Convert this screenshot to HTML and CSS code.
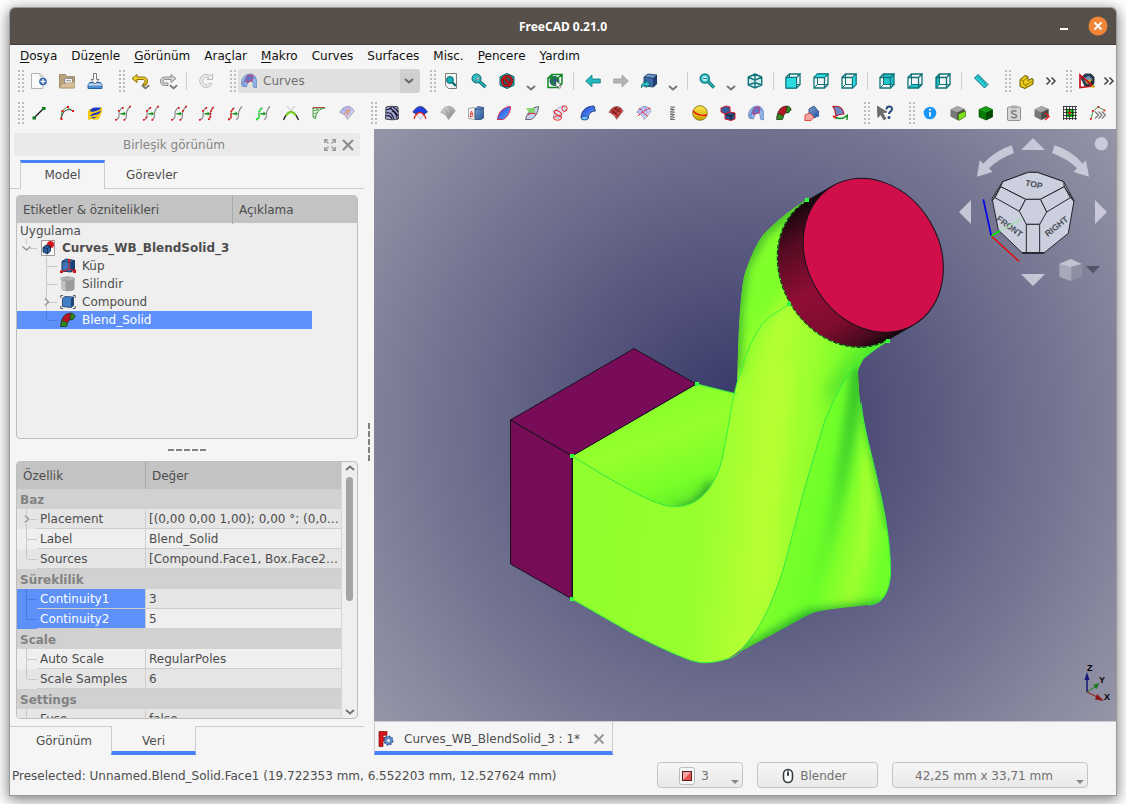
FILE: index.html
```html
<!DOCTYPE html>
<html lang="tr">
<head>
<meta charset="utf-8">
<title>FreeCAD 0.21.0</title>
<link rel="stylesheet" href="styles.css">
</head>
<body>
<svg class="defs" aria-hidden="true">
  <defs>
    <linearGradient id="g-blue" x1="0" y1="0" x2="1" y2="1"><stop offset="0" stop-color="#7aa2d8"/><stop offset="1" stop-color="#2b5593"/></linearGradient>
    <linearGradient id="g-royal" x1="0" y1="0" x2="1" y2="1"><stop offset="0" stop-color="#1d36d8"/><stop offset="1" stop-color="#5fb4ff"/></linearGradient>
    <linearGradient id="g-lilac" x1="0" y1="0" x2="1" y2="1"><stop offset="0" stop-color="#a3a8ff"/><stop offset="1" stop-color="#e4e6ff"/></linearGradient>
    <linearGradient id="g-grey" x1="0" y1="0" x2="1" y2="1"><stop offset="0" stop-color="#e0e0e0"/><stop offset="1" stop-color="#7f7f7f"/></linearGradient>
    <linearGradient id="g-gold" x1="0" y1="0" x2="0" y2="1"><stop offset="0" stop-color="#fbe84e"/><stop offset="1" stop-color="#c8a400"/></linearGradient>

    <symbol id="new" viewBox="0 0 16 16"><path d="M.5.5h8.500l3 3v12H.5z" fill="#fafafa" stroke="#b4b4b4"/><path d="M9 .5v3h3" fill="none" stroke="#c4c4c4"/><circle cx="12" cy="8.500" r="3.800" fill="#2f62a6"/><path d="M12 6v5M9.500 8.500h5" stroke="#fff" stroke-width="1.400"/></symbol>
    <symbol id="open" viewBox="0 0 16 16"><path d="M.5 14V1.500h6l1 2h8V15H.5z" fill="#b9a07c" stroke="#a58b66"/><path d="M5.500 12V5.500h8V10H6" fill="#f2f0ec" stroke="#8d8d8d"/><path d="M7 7.500h5" stroke="#999"/><path d="M1 14.500l3-3.500h2l1.500-1.500h8V14.500z" fill="#d6bf9a"/></symbol>
    <symbol id="save" viewBox="0 0 16 16"><path d="M2.500 9.500h11l1.500 2.500v3.500H1V12z" fill="#4f8fd6" stroke="#27609f"/><path d="M2 10.500h12l1 2H1z" fill="#c7d8ea"/><path d="M6.500.5h3v6h2.500L8 11 4 6.500h2.500z" fill="#fbfbfb" stroke="#7c7c7c"/></symbol>
    <symbol id="undo" viewBox="0 0 18 16"><path d="M1 5.500L6 1.500v2.500h6.500c3 0 4 2 4 4.500s-2 4.500-4.500 4.500v-2.500c1.500 0 2-.7 2-2s-.7-2-2-2H6v3z" fill="url(#g-gold)" stroke="#8d6f00"/></symbol>
    <symbol id="redo" viewBox="0 0 18 16"><path d="M17 5.500L12 1.500v2.500H5.500c-3 0-4 2-4 4.500s2 4 4 4h3.500V10H6c-1.500 0-2-.5-2-1.500s.7-2 2-2h6v3z" fill="#cfcfcf" stroke="#8e8e8e"/></symbol>
    <symbol id="refresh" viewBox="0 0 16 16"><path d="M12.500 3A6.500 6.500 0 1 0 14 11l-2-1a4 4 0 1 1-1-5.200L9 6.500h5.500v-5.500z" fill="#f2f2f2" stroke="#b8b8b8"/></symbol>
    <symbol id="wb" viewBox="0 0 16 16"><path d="M.6 9C1.500 4 5 .8 10 1c3 .3 5 3 5.400 6v8l-3-1c0-3-.4-5-1.400-6L9 8c-2 1-3 3-3.500 6L1 13z" fill="#93b4ea" stroke="#5577b5" stroke-width=".7"/><path d="M5.500 4C7 2 10 1.500 12 3c-.7 1.500-1 3.500-1 5L9 8 7.500 9.500l-3-1z" fill="#6a72c8" stroke="#e0214f" stroke-width=".9"/><path d="M1 11c2-4 6-6 13-6M3 13.500c0-5 1-8 4-11.500" fill="none" stroke="#4f76c0" stroke-width=".6"/></symbol>
    <symbol id="fitall" viewBox="0 0 16 16"><path d="M2.500.5h11v15h-8l-3-3z" fill="#f4f4f4" stroke="#7d7d78"/><circle cx="7" cy="7" r="3.400" fill="#12b3b8" stroke="#0b6468"/><path d="M9.500 9.500l3.500 3.500" stroke="#0b6d72" stroke-width="2.400"/></symbol>
    <symbol id="fitsel" viewBox="0 0 16 16"><circle cx="5.500" cy="5.500" r="4.500" fill="#2ac3c6" stroke="#0b6468"/><path d="M8.500 8.500l6 5.500" stroke="#0b6468" stroke-width="3.400"/><path d="M8.500 8.500l6 5.500" stroke="#25bcc0" stroke-width="1.600"/><path d="M3.500 8.500l4-5 1 2.500-2 .5z" fill="#fff" stroke="#555" stroke-width=".6"/></symbol>
    <symbol id="drawstyle" viewBox="0 0 16 16"><path d="M8 .5l7 3.200v8.500L8 15.500 1 12.200V3.700z" fill="#28b9c0" stroke="#0d6065"/><circle cx="8" cy="8" r="4.800" fill="#2b6a70" stroke="#6e1010" stroke-width="2.800"/><path d="M4.600 4.600l6.800 6.800" stroke="#6e1010" stroke-width="2.800"/><circle cx="8" cy="8" r="4.800" fill="none" stroke="#d01a1e" stroke-width="1.500"/><path d="M4.600 4.600l6.800 6.800" stroke="#d01a1e" stroke-width="1.500"/></symbol>
    <symbol id="boxsel" viewBox="0 0 16 16"><circle cx="7.500" cy="8" r="5" fill="#34598f"/><path d="M1 5h10v9.500H1zM1 5l4-3.500h10L11 5M15 1.500v9L11 14.500M5 1.500v9.500h10" fill="none" stroke="#138a25" stroke-width="1.500"/><path d="M9 8v6.500l1.800-1.500 1.700 2.500 1.300-.8-1.500-2.200h2.300z" fill="#fff" stroke="#555" stroke-width=".6"/></symbol>
    <symbol id="back" viewBox="0 0 16 16"><path d="M.7 8L7 2v4h8.300v4H7v4z" fill="#24b9bf" stroke="#0f7a80" stroke-width=".8"/></symbol>
    <symbol id="fwd" viewBox="0 0 16 16"><path d="M15.300 8L9 2v4H.7v4H9v4z" fill="#b4b4b4" stroke="#9c9c9c" stroke-width=".8"/></symbol>
    <symbol id="link" viewBox="0 0 16 16"><path d="M3 4l4-3 9 1-3 3z" fill="#6c97cd"/><path d="M3 4l9.500 1v9L3 13z" fill="#3a68a8"/><path d="M12.500 5L16 2v8.500L12.500 14z" fill="#1e3f70"/><path d="M3 4l4-3 9 1v8.500L12.500 14 3 13zM3 4l9.500 1L16 2M12.500 5v9" fill="none" stroke="#17335c" stroke-width=".8"/><path d="M0 15c0-4 2-5.500 5-5.500V7.500L9 11l-4 3.500v-2c-2 0-3.500.5-5 2.500z" fill="#2fc4c9" stroke="#0c6368" stroke-width=".8"/></symbol>
    <symbol id="zoomi" viewBox="0 0 16 16"><circle cx="5.800" cy="5.500" r="4.500" fill="#4fcdd0" stroke="#118288" stroke-width="1.600"/><circle cx="5.800" cy="5.500" r="2.200" fill="#d8f3f3"/><path d="M4 5.500h4" stroke="#118288"/><path d="M9 8.500l6 6" stroke="#0b6468" stroke-width="3.200"/><path d="M9 8.500l6 6" stroke="#27bcc1" stroke-width="1.600"/></symbol>
    <symbol id="iso" viewBox="0 0 16 16"><path d="M8 1l6.700 3v8L8 15 1.300 12V4zM1.300 4L8 7.200 14.700 4M8 7.200V15M8 1v5M1.300 12L8 9.500l6.700 2.500" fill="#d3eeef" stroke="#0f7379" stroke-width="1.400"/></symbol>
    <symbol id="wire" viewBox="0 0 16 16"><path d="M1 4.500h10.500V15H1zM1 4.500L4.500 1H15L11.500 4.500M15 1v10.500L11.500 15" fill="none" stroke="#0f7379" stroke-width="1.300"/><path d="M4.500 1v10.500H15M1 15l3.500-3.500" fill="none" stroke="#0f7379"/></symbol>
    <symbol id="front" viewBox="0 0 16 16"><use href="#wire"/><path d="M1 4.500h10.500V15H1z" fill="#2cdbe0" stroke="#0f7379"/></symbol>
    <symbol id="top" viewBox="0 0 16 16"><use href="#wire"/><path d="M1 4.500L4.500 1H15l-3.500 3.500z" fill="#2cdbe0" stroke="#0f7379"/></symbol>
    <symbol id="right" viewBox="0 0 16 16"><use href="#wire"/><path d="M11.500 4.500L15 1v10.500L11.500 15z" fill="#2cdbe0" stroke="#0f7379"/></symbol>
    <symbol id="rear" viewBox="0 0 16 16"><path d="M4.500 1H15v10.500H4.500z" fill="#22c6cc"/><use href="#wire"/></symbol>
    <symbol id="bottom" viewBox="0 0 16 16"><path d="M1 15l3.500-3.500H15L11.500 15z" fill="#22c6cc"/><use href="#wire"/></symbol>
    <symbol id="left" viewBox="0 0 16 16"><path d="M1 4.500L4.500 1v10.500L1 15z" fill="#1fb5bb"/><use href="#wire"/></symbol>
    <symbol id="ruler" viewBox="0 0 16 16"><path d="M5 1.500l10 10-3.500 3.500-10-10z" fill="#27cdd3" stroke="#0f7379"/><path d="M6.500 3.500L5 5M8.500 5.500L7 7M10.500 7.500L9 9M12.500 9.500L11 11" stroke="#0f7379" stroke-width=".9"/></symbol>
    <symbol id="part" viewBox="0 0 16 16"><path d="M2 6.500l5-4 3 1v4l4-2 1 .5v5L7 15.500l-5-2z" fill="#e8c81c" stroke="#6c5b00"/><path d="M2 6.500l3.500 1.200L10 4M5.500 7.700v3.500L8 12v3M8 12l7-4" fill="none" stroke="#8c7700" stroke-width=".8"/></symbol>
    <symbol id="measure" viewBox="0 0 16 16"><path d="M2 5l4-4h6l3 3v6l-3 3H6z" fill="#2c4260" stroke="#151515" stroke-width=".8"/><path d="M5 5l5-2 3 3-2 4-5-1z" fill="#6f8cb4"/><path d="M6 8l6-2 1 3-5 2z" fill="#c3a92e"/><path d="M1 2v12.500L14 13z" fill="none" stroke="#c31217" stroke-width="1.700"/><path d="M12 8l3 6" stroke="#1c1c1c" stroke-width="1.200"/><circle cx="14" cy="13.500" r="1.500" fill="#d8b70f"/></symbol>

    <symbol id="line" viewBox="0 0 16 16"><path d="M3 13L13 3" stroke="#111" stroke-width="1.300"/><path d="M1.500 11.500h3.500v3H1.500zM11 2h3.500v3H11z" fill="#0d7d1a"/></symbol>
    <symbol id="editc" viewBox="0 0 16 16"><path d="M2 14L3 6l5-4 6 4" fill="none" stroke="#3f9b3f"/><path d="M2 14C3 9 5 5 9 4.500c2 0 3.500.5 5 1.500" fill="none" stroke="#555" stroke-width="1.200"/><path d="M1.500 13h2v2h-2zM2.500 5h2v2h-2zM8 1h2v2H8zM13 5h2v2h-2z" fill="#e11"/></symbol>
    <symbol id="flag" viewBox="0 0 16 16"><path d="M1.500 5c4-3 8 1 13.500-3v5c-1 2-2 4-3 7-3 2-7-1-11 1 0-4-.5-7 .5-10z" fill="#f7cb12"/><path d="M4 4c4-2.500 6-1 10-1.500-1 2-2 2.500-5 3.500s-4 1-6 .5zM5 9c2-.5 3-1.500 5-1.500 1-1 3-1 4-2-1 4-4 4-6 4.500-2 .5-3 1-5 1zM4 12.500c2-1 4 0 6-1l-3 2z" fill="#1c36c4"/></symbol>
    <symbol id="sl" viewBox="0 0 16 16"><path d="M1 14.500C6 14 3 9 4.500 6c.5-1.500 1.500-2 3-3.500M9 14.500c4-1 1.500-5 3-8.500.5-1.500 1.500-3 3-4.500" fill="none" stroke="#8a8a8a" stroke-width="1.200"/><path d="M5.500 8h3V6.500L11 8.700l-2.500 2.100V9.400h-3z" fill="#129318"/></symbol>
    <symbol id="c1" viewBox="0 0 16 16"><use href="#sl"/><path d="M0 14h1.700v1.700H0zM3 5h1.700v1.700H3zM8.500 14h1.700v1.700H8.500zM14.300.8H16v1.700h-1.700zM7 2h1.700v1.700H7z" fill="#e11"/></symbol>
    <symbol id="c2" viewBox="0 0 16 16"><use href="#sl"/><path d="M0 14h1.700v1.700H0zM2.500 11.500h1.700v1.700H2.500zM3 5h1.700v1.700H3zM6.500 2h1.700v1.700H6.500zM8.500 14h1.700v1.700H8.500zM14.300.8H16v1.700h-1.700z" fill="#e11"/></symbol>
    <symbol id="c3" viewBox="0 0 16 16"><use href="#sl"/><path d="M0 14h1.700v1.700H0zM7 2h1.700v1.700H7zM8.500 14h1.700v1.700H8.500zM11 5h1.700v1.700H11zM14.300.8H16v1.700h-1.700z" fill="#e11"/></symbol>
    <symbol id="c4" viewBox="0 0 16 16"><use href="#sl"/><path d="M9 14.500c4-1 1.500-5 3-8.500.5-1.500 1.500-3 3-4.500" fill="none" stroke="#e11" stroke-width="1.800" stroke-dasharray="1.700 1.300"/><path d="M0 14h1.700v1.700H0zM3 5h1.700v1.700H3zM6.500 2h1.700v1.700H6.500z" fill="#e11"/></symbol>
    <symbol id="c5" viewBox="0 0 16 16"><use href="#sl"/><path d="M1 14.500C6 14 3 9 4.500 6c.5-1.500 1.500-2 3-3.500" fill="none" stroke="#e11" stroke-width="1.800" stroke-dasharray="1.700 1.300"/></symbol>
    <symbol id="c6" viewBox="0 0 16 16"><use href="#sl"/><path d="M1 14.500C6 14 3 9 4.500 6c.5-1.500 1.500-2 3-3.500" fill="none" stroke="#1bef1b" stroke-width="2" stroke-dasharray="1.700 1.300"/></symbol>
    <symbol id="blendc" viewBox="0 0 16 16"><path d="M4 1l8 9M12 1L4 10" stroke="#c4c4c4"/><path d="M.5 15C3 9 5 7 8 7s5 2 7.500 8" fill="none" stroke="#222" stroke-width="1.400"/><path d="M3 10.500C5 8 6 7 8 7s3 1 5 3.500" fill="none" stroke="#6fd413" stroke-width="1.800"/></symbol>
    <symbol id="comb" viewBox="0 0 16 16"><path d="M2 3h12C8 4 5 8 4.500 14L2 12z" fill="#e1efdb" stroke="#3b943b" stroke-width=".8"/><path d="M2 6l6-1.500M2 9l4.500-1.500M2 12l3-1M5 3l2 3M9 3l1 1.500" stroke="#3b943b" stroke-width=".7"/><path d="M2 4V2.500h12" fill="none" stroke="#b34a4a"/></symbol>
    <symbol id="fan" viewBox="0 0 16 16"><path d="M.8 7.500C3 3 6 1.500 9 1.500c3 0 5 2 6.200 4.500L8.500 14.500 6.500 11C5 9.500 3 8 .8 7.500z" stroke="#888" stroke-width=".6"/><path d="M4 4c2 1 4 4 4.500 6.500M9 1.500c1.500 2 2 4.500 1.500 8" fill="none" stroke="#777" stroke-width=".4"/></symbol>
    <symbol id="fanlilac" viewBox="0 0 16 16"><use href="#fan" fill="url(#g-lilac)"/><path d="M5 9.500C6 7 9 5 12 5M7 3.500c2 2 2.500 5 1 8" fill="none" stroke="#f58c3c"/></symbol>
    <symbol id="zebra" viewBox="0 0 16 16"><path d="M2 2c4-1 8-1 12 0l.5 12c-4 1-8 1-13 0z" fill="#a5a9d2" stroke="#222" stroke-width=".8"/><path d="M2 5c3-1 5-1 6-3M5 3c4 2 6 3 9 8M2 8c5-1 6 1 8 6M2 11c3-1 5 0 6 3M9 2c2 1 4 3 5 5M13 14c0-3-2-7-5-8" fill="none" stroke="#151530" stroke-width="1.100"/></symbol>
    <symbol id="f2" viewBox="0 0 16 16"><path d="M4 9l4.500 5.500L12.500 9C9 7 6 7.500 4 9z" fill="#ececff" stroke="#999" stroke-width=".6"/><path d="M.8 7C4 2 7 1 9 1.500c3 .5 5 3 6.500 5.500L12 9.500C9 6 6 7 3.500 9z" fill="#1f3fe0" stroke="#333" stroke-width=".6"/><path d="M2 14c1-4 4-6.500 6-6.500s5 2.500 6 6.500" fill="none" stroke="#e11" stroke-width="1.100"/></symbol>
    <symbol id="fangrey" viewBox="0 0 16 16"><use href="#fan" fill="url(#g-grey)"/></symbol>
    <symbol id="sketch" viewBox="0 0 16 16"><path d="M7 4l3-2.500 5.500 1V13L13 14.500H7z" fill="url(#g-blue)" stroke="#1e3f70" stroke-width=".7"/><path d="M7 4l6 .5 2.500-2" fill="none" stroke="#1e3f70" stroke-width=".7"/><path d="M.5 3.500l6-1v12l-6-1z" fill="#f6f6f6" stroke="#888" stroke-width=".7"/><path d="M2 8l3 2-1.500-4L2 12l3.500-1" fill="none" stroke="#e02020" stroke-width=".8"/></symbol>
    <symbol id="leaf" viewBox="0 0 16 16"><path d="M1.500 14.500C2 8 7 2 14.500 1.500c0 6-4 12-8 13z" fill="url(#g-royal)" stroke="#e2284a"/></symbol>
    <symbol id="leaf2" viewBox="0 0 16 16"><path d="M1.500 14.500C3 8 8 2 14.500 1.500c0 6-4 12-8 13z" fill="#c3d1f0" stroke="#444" stroke-width=".8"/><path d="M2 3h9v5H5z" fill="#79d65c" fill-opacity=".85"/><path d="M4 10c2-3 5-2 8-1" fill="none" stroke="#e2284a" stroke-width="1.100"/></symbol>
    <symbol id="pipe" viewBox="0 0 16 16"><path d="M1.500 13C1 8 4 2 12 1l2.500 5C10 7 9.500 9 9.500 13z" fill="#dfe4f6" stroke="#8890a8" stroke-width=".6"/><g fill="none" stroke="#e11" stroke-width=".9"><ellipse cx="5.500" cy="13" rx="4" ry="2.200"/><ellipse cx="5.800" cy="8" rx="4" ry="2" transform="rotate(30 5.800 8)"/><ellipse cx="12.500" cy="3.500" rx="2.600" ry="2.800"/></g></symbol>
    <symbol id="tube" viewBox="0 0 16 16"><path d="M1 13C1 7 5 1 14 1l1.500 5C10 6.500 8.500 9 8.500 13z" fill="url(#g-royal)" stroke="#1c2b60" stroke-width=".8"/><ellipse cx="4.700" cy="13" rx="3.700" ry="2" fill="#5fc0ff" stroke="#1c2b60" stroke-width=".7"/></symbol>
    <symbol id="fanred" viewBox="0 0 16 16"><use href="#fan" fill="#cc3d3d"/><path d="M3 5l7.500 6M6 2.500l7 5M12.500 3l-6 6M9 1.500L4 9" stroke="#4d0808" stroke-width=".7"/></symbol>
    <symbol id="fanred2" viewBox="0 0 16 16"><use href="#fan" fill="url(#g-lilac)"/><path d="M3 3l9 9M2 11C6 7 10 4 15 3" fill="none" stroke="#e02020" stroke-dasharray="3 1"/></symbol>
    <symbol id="spring" viewBox="0 0 16 16"><path d="M6 2h4.500L6 4.500h4.500L6 7h4.500L6 9.500h4.500L6 12h4.500L6 14.500h5" fill="none" stroke="#777"/></symbol>
    <symbol id="ball" viewBox="0 0 16 16"><circle cx="8" cy="8" r="7.300" fill="url(#g-gold)" stroke="#77620a" stroke-width=".8"/><path d="M1 6c4 4 9 5 14 4" fill="none" stroke="#e11" stroke-width="1.400"/></symbol>
    <symbol id="blocks" viewBox="0 0 16 16"><path d="M1 3l5-2 4 1v5L5 9 1 7z" fill="#365e9c" stroke="#d01c2c"/><path d="M5 9l5-2 5 1v6l-4 1.500-6-1.500z" fill="#2a4b86" stroke="#d01c2c"/><path d="M5.500 9.500l5.500 1.500v4M11 11l4-2.500" fill="none" stroke="#111" stroke-width=".8"/></symbol>
    <symbol id="blend" viewBox="0 0 16 16"><path d="M.8 14.500C1 7 4 2 9 1.200c3-.5 5 1 6 3.300l-2.500 3.300C10 7 8 8.500 6.500 14z" fill="#b51624" stroke="#222" stroke-width=".7"/><path d="M.8 14.500c0-2 .5-4 1.200-6L7.500 11l-1 3.500zM11 1.200c2.500 0 3.500 1.500 4 3.300l-2.500 3.300-2.500-.3z" fill="#2f8a1f" stroke="#163f10" stroke-width=".6"/></symbol>
    <symbol id="solid" viewBox="0 0 16 16"><path d="M5 4l5-3 5 6-4 6-6-3z" fill="url(#g-blue)" stroke="#23406c" stroke-width=".8"/><path d="M1 10l5-2 4 4-3 3.500H.8z" fill="#f6a3a3" stroke="#d42a2a" stroke-width=".8"/><circle cx="13" cy="10" r="2.200" fill="#3e66b0"/></symbol>
    <symbol id="sweep" viewBox="0 0 16 16"><path d="M1 1.500c6-1 10 1.500 11 7.500 0 0-5 0-8 2C3 8 4 5 1 1.500z" fill="#6888c8" stroke="#b81a2a" stroke-width="1.200"/><path d="M2 12c4 2 9 2 13-1M15 15l.5-5-4 3" fill="none" stroke="#159220" stroke-width="1.400"/><path d="M1 11l3 2" stroke="#e11" stroke-width="1.600"/></symbol>
    <symbol id="whats" viewBox="0 0 16 16"><path d="M0 1l10 6-4.500 1L9 13.500 7 15 3.500 9.500 1 12.500z" fill="#6b6f6b" stroke="#555" stroke-width=".7"/><path d="M9.500 4.500c0-4 5.500-4 5.500-.5 0 2.500-3 2.500-3 5" fill="none" stroke="#234a7a" stroke-width="2"/><circle cx="12" cy="12.500" r="1.500" fill="#234a7a"/></symbol>
    <symbol id="info" viewBox="0 0 16 16"><circle cx="8" cy="8" r="6.300" fill="#1b95f5"/><path d="M8 7v4.500" stroke="#fff" stroke-width="1.600"/><circle cx="8" cy="4.800" r="1" fill="#fff"/></symbol>
    <symbol id="cubeg" viewBox="0 0 16 16"><path d="M.5 4.500L7.500 1l7 3v7.500L7 15 .5 11.500z" fill="#777"/><path d="M.5 4.500L7.500 1l7 3-7 3.500z" fill="#a6a6a6"/><path d="M7.300 7.500l7.200-3.500v7.500L7.300 15z" fill="#4c4c4c"/></symbol>
    <symbol id="cubeface" viewBox="0 0 16 16"><use href="#cubeg"/><path d="M8.500 9L15.500 6v5.500l-7 4z" fill="#7ee01a" stroke="#3f7d0b" stroke-width=".8"/></symbol>
    <symbol id="cubegreen" viewBox="0 0 16 16"><path d="M1 4.500L8 1.500l6.500 3v7.500L8 15 1 12z" fill="#067a06" stroke="#034803" stroke-width=".6"/><path d="M1 4.500L8 1.500l6.500 3L8 7.800z" fill="#1a9d1a"/><path d="M8 7.800l6.500-3.300v7.500L8 15z" fill="#024b02"/></symbol>
    <symbol id="clip" viewBox="0 0 16 16"><rect x="1.500" y="2" width="13" height="13.500" rx="1" fill="#d5d5d5" stroke="#929292"/><rect x="5" y=".5" width="6" height="3" fill="#aaa"/><path d="M10.500 6.500c-1-1.200-5-1.200-5 .8s5 1.500 5 3.700-4 2.200-5.200.5" fill="none" stroke="#7c7c7c" stroke-width="1.500"/></symbol>
    <symbol id="cubered" viewBox="0 0 16 16"><use href="#cubeg"/><path d="M11 8l4 3.500-4 3.500" fill="none" stroke="#ee1c1c" stroke-width="1.500"/></symbol>
    <symbol id="grid" viewBox="0 0 16 16"><rect x="1" y="1" width="14" height="14" fill="#eee"/><rect x="4" y="4" width="8" height="8" fill="#18d018"/><path d="M1 1.500h14M1 4.500h14M1 7.500h14M1 10.500h14M1 13.500h14M1.500 1v14M4.500 1v14M7.500 1v14M10.500 1v14M13.500 1v14" stroke="#222" stroke-width=".8"/><rect x="6.500" y="6.500" width="2.500" height="2.500" fill="#e11"/></symbol>
    <symbol id="more" viewBox="0 0 16 16"><path d="M1 14L3 6l5-4 6 3" fill="none" stroke="#4aa04a"/><path d="M0 13h1.800v1.800H0zM2 5h1.800v1.800H2zM7.500 1h1.800v1.800H7.500zM13.500 4.500h1.800v1.800h-1.800z" fill="#e11"/><path d="M5 6.500l3.500 3.500L5 13.500M8.500 6.500L12 10l-3.500 3.500M12 6.500l3.500 3.500-3.500 3.500" fill="none" stroke="#777" stroke-width="1.200"/></symbol>

    <symbol id="doc" viewBox="0 0 16 16"><path d="M1.500.5h13v15h-13z" fill="#fbfbfb" stroke="#999"/><circle cx="10.500" cy="4.500" r="3.500" fill="#dc1420"/><path d="M3 7.500L6 5l4.500 1v5L7.500 14 3 12z" fill="#2d5fa6" stroke="#123" stroke-width=".8"/><path d="M3 7.500l4.500 1L10.500 6M7.500 8.500V14" fill="none" stroke="#123" stroke-width=".7"/></symbol>
    <symbol id="cube" viewBox="0 0 16 16"><path d="M2 3.500L6 1l8.500 1.500v9L11 14l-9-1z" fill="#3f74b8" stroke="#18345e"/><path d="M11 4.500l3.500-2v9L11 14z" fill="#1d4275"/><path d="M2 3.500l9 1v9.500M11 4.500l3.500-2" fill="none" stroke="#18345e" stroke-width=".8"/><path d="M9 2v9L2 14M9 11l6 2" fill="none" stroke="#d21a1a"/><path d="M0 12.500h3v2.500H0zM13 11.500h3V15h-3zM8 1h2.500v2.500H8z" fill="#d21a1a"/></symbol>
    <symbol id="cyl" viewBox="0 0 16 16"><path d="M1.500 3v10c0 3 13 3 13 0V3z" fill="#9c9c9c"/><path d="M1.500 3v10c0 1 2 1.600 4 2V4z" fill="#c2c2c2"/><ellipse cx="8" cy="3" rx="6.500" ry="2.200" fill="#b0b0b0" stroke="#8a8a8a" stroke-width=".6"/><path d="M.5 1h3v3h-3zM9.500 1h3v3h-3z" fill="#b5b5b5"/></symbol>
    <symbol id="compound" viewBox="0 0 16 16"><path d="M2.500 4.500L5 2.500l8.500.5v8.500L11 13.500 2.500 12.500z" fill="#4480c6" stroke="#18345e" stroke-width=".8"/><path d="M11 5l2.500-2v8.500l-2.500 2z" fill="#1d4275"/><path d="M3 1.500H.8V4M.8 12v2.500H3M13 1.500h2.200V4M15.200 12v2.500H13" fill="none" stroke="#444" stroke-width=".9"/></symbol>
    <symbol id="fclogo" viewBox="0 0 16 16"><path d="M1 .5h8v3.800H5v2.200h3V10H5v5.500H1z" fill="#d9161c" stroke="#7c090d" stroke-width=".7"/><circle cx="10.500" cy="9.500" r="4.200" fill="#6d95cc" stroke="#2d5590" stroke-width="1.500" stroke-dasharray="2 1.200"/><circle cx="10.500" cy="9.500" r="3.500" fill="#5d88c4"/><circle cx="10.500" cy="9.500" r="1.500" fill="#f5f5f5"/></symbol>
    <symbol id="chev" viewBox="0 0 10 6"><path d="M1 1l4 3.500L9 1" fill="none" stroke="currentColor" stroke-width="2"/></symbol>
    <symbol id="ext" viewBox="0 0 12 10"><path d="M1.500 1.500L5 5 1.500 8.500M6.500 1.500L10 5l-3.500 3.500" fill="none" stroke="#444" stroke-width="1.500"/></symbol>
  </defs>
</svg>

<div class="window">
  <header class="titlebar">
    <h1>FreeCAD 0.21.0</h1>
    <div class="wincontrols">
      <button class="winbtn" aria-label="Küçült"><svg width="18" height="18" viewBox="0 0 18 18"><path d="M5 12h8" stroke="#fff" stroke-width="2"/></svg></button>
      <button class="winbtn" aria-label="Kapat"><svg width="20" height="20" viewBox="0 0 20 20"><circle cx="10" cy="10" r="9.500" fill="#f08437"/><path d="M6.500 6.500l7 7M13.500 6.500l-7 7" stroke="#fff" stroke-width="2"/></svg></button>
    </div>
  </header>

  <nav class="menubar">
    <button><u>D</u>osya</button><button>Düz<u>e</u>nle</button><button><u>G</u>örünüm</button><button>Ara<u>ç</u>lar</button><button><u>M</u>akro</button><button>Curves</button><button>Surfaces</button><button>Misc.</button><button><u>P</u>encere</button><button><u>Y</u>ardım</button>
  </nav>

  <div class="toolbars">
    <div class="toolrow">
      <div class="toolbar"><i class="grip"></i>
        <button class="tool" aria-label="Yeni"><svg><use href="#new"/></svg></button>
        <button class="tool" aria-label="Aç"><svg><use href="#open"/></svg></button>
        <button class="tool" aria-label="Kaydet"><svg><use href="#save"/></svg></button>
      </div>
      <div class="toolbar"><i class="grip"></i>
        <button class="tool wide" aria-label="Geri al"><svg><use href="#undo"/></svg><svg class="tiny"><use href="#chev"/></svg></button>
        <button class="tool wide" aria-label="Yinele"><svg><use href="#redo"/></svg><svg class="tiny"><use href="#chev"/></svg></button>
        <i class="sep"></i>
        <button class="tool" aria-label="Yenile"><svg><use href="#refresh"/></svg></button>
      </div>
      <div class="toolbar"><i class="grip"></i>
        <div class="combo"><svg class="comboicon"><use href="#wb"/></svg><select aria-label="Tezgah"><option>Curves</option></select><svg class="combochev"><use href="#chev"/></svg></div>
      </div>
      <div class="toolbar"><i class="grip"></i>
        <button class="tool" aria-label="Tümünü sığdır"><svg><use href="#fitall"/></svg></button>
        <button class="tool" aria-label="Seçimi sığdır"><svg><use href="#fitsel"/></svg></button>
        <button class="tool" aria-label="Çizim stili"><svg><use href="#drawstyle"/></svg></button>
        <button class="drop" aria-label="Çizim stilleri"><svg><use href="#chev"/></svg></button>
        <button class="tool" aria-label="Kutu"><svg><use href="#boxsel"/></svg></button>
        <i class="sep"></i>
        <button class="tool" aria-label="Geri"><svg><use href="#back"/></svg></button>
        <button class="tool" aria-label="İleri"><svg><use href="#fwd"/></svg></button>
        <button class="tool" aria-label="Bağlantı"><svg><use href="#link"/></svg></button>
        <button class="drop" aria-label="Bağlantılar"><svg><use href="#chev"/></svg></button>
        <i class="sep"></i>
        <button class="tool" aria-label="Yakınlaştır"><svg><use href="#zoomi"/></svg></button>
        <button class="drop" aria-label="Yakınlaştırma"><svg><use href="#chev"/></svg></button>
        <button class="tool" aria-label="İzometrik"><svg><use href="#iso"/></svg></button>
        <i class="sep"></i>
        <button class="tool" aria-label="Ön"><svg><use href="#front"/></svg></button>
        <button class="tool" aria-label="Üst"><svg><use href="#top"/></svg></button>
        <button class="tool" aria-label="Sağ"><svg><use href="#right"/></svg></button>
        <i class="sep"></i>
        <button class="tool" aria-label="Arka"><svg><use href="#rear"/></svg></button>
        <button class="tool" aria-label="Alt"><svg><use href="#bottom"/></svg></button>
        <button class="tool" aria-label="Sol"><svg><use href="#left"/></svg></button>
        <i class="sep"></i>
        <button class="tool" aria-label="Ölç"><svg><use href="#ruler"/></svg></button>
      </div>
      <div class="toolbar"><i class="grip"></i>
        <button class="tool" aria-label="Parça"><svg><use href="#part"/></svg></button>
        <button class="extend" aria-label="Daha fazla"><svg><use href="#ext"/></svg></button>
      </div>
      <div class="toolbar snug"><i class="grip"></i>
        <button class="tool" aria-label="Ölçüm"><svg><use href="#measure"/></svg></button>
        <button class="extend last" aria-label="Daha fazla"><svg><use href="#ext"/></svg></button>
      </div>
    </div>
    <div class="toolrow">
      <div class="toolbar"><i class="grip"></i>
        <button class="tool" aria-label="Line"><svg><use href="#line"/></svg></button>
        <button class="tool" aria-label="Edit"><svg><use href="#editc"/></svg></button>
        <button class="tool" aria-label="Import"><svg><use href="#flag"/></svg></button>
        <button class="tool" aria-label="Join"><svg><use href="#c1"/></svg></button>
        <button class="tool" aria-label="Split"><svg><use href="#c2"/></svg></button>
        <button class="tool" aria-label="Extend"><svg><use href="#c3"/></svg></button>
        <button class="tool" aria-label="Discretize"><svg><use href="#c4"/></svg></button>
        <button class="tool" aria-label="Approximate"><svg><use href="#c5"/></svg></button>
        <button class="tool" aria-label="Interpolate"><svg><use href="#c6"/></svg></button>
        <button class="tool" aria-label="Blend curve"><svg><use href="#blendc"/></svg></button>
        <button class="tool" aria-label="Comb"><svg><use href="#comb"/></svg></button>
        <button class="tool" aria-label="Iso curve"><svg><use href="#fanlilac"/></svg></button>
      </div>
      <div class="toolbar"><i class="grip"></i>
        <button class="tool" aria-label="Zebra"><svg><use href="#zebra"/></svg></button>
        <button class="tool" aria-label="Trim"><svg><use href="#f2"/></svg></button>
        <button class="tool" aria-label="Parametric"><svg><use href="#fangrey"/></svg></button>
        <button class="tool" aria-label="Sketch"><svg><use href="#sketch"/></svg></button>
        <button class="tool" aria-label="Sweep"><svg><use href="#leaf"/></svg></button>
        <button class="tool" aria-label="Birail"><svg><use href="#leaf2"/></svg></button>
        <button class="tool" aria-label="Profile"><svg><use href="#pipe"/></svg></button>
        <button class="tool" aria-label="Pipeshell"><svg><use href="#tube"/></svg></button>
        <button class="tool" aria-label="Gordon"><svg><use href="#fanred"/></svg></button>
        <button class="tool" aria-label="Segment"><svg><use href="#fanred2"/></svg></button>
        <button class="tool" aria-label="Compression"><svg><use href="#spring"/></svg></button>
        <button class="tool" aria-label="Reflect"><svg><use href="#ball"/></svg></button>
        <button class="tool" aria-label="Outline"><svg><use href="#blocks"/></svg></button>
        <button class="tool" aria-label="Blend surface"><svg><use href="#wb"/></svg></button>
        <button class="tool" aria-label="Blend solid"><svg><use href="#blend"/></svg></button>
        <button class="tool" aria-label="Flatten"><svg><use href="#solid"/></svg></button>
        <button class="tool" aria-label="Rotation sweep"><svg><use href="#sweep"/></svg></button>
      </div>
      <div class="toolbar"><i class="grip"></i>
        <button class="tool" aria-label="Bu nedir"><svg><use href="#whats"/></svg></button>
      </div>
      <div class="toolbar"><i class="grip"></i>
        <button class="tool" aria-label="Info"><svg><use href="#info"/></svg></button>
        <button class="tool" aria-label="Face"><svg><use href="#cubeface"/></svg></button>
        <button class="tool" aria-label="Solid"><svg><use href="#cubegreen"/></svg></button>
        <button class="tool" aria-label="Clipboard"><svg><use href="#clip"/></svg></button>
        <button class="tool" aria-label="Command"><svg><use href="#cubered"/></svg></button>
        <button class="tool" aria-label="Grid"><svg><use href="#grid"/></svg></button>
        <button class="tool" aria-label="More"><svg><use href="#more"/></svg></button>
      </div>
    </div>
  </div>

  <main class="main">
    <aside class="dock">
      <div class="docktitle"><h2>Birleşik görünüm</h2>
        <button class="mini" aria-label="Ayır"><svg width="12" height="12" viewBox="0 0 12 12"><path d="M.7 4V.7H4M8 .7h3.300V4M11.300 8v3.300H8M4 11.300H.7V8M1 1l3.500 3.500M11 1L7.500 4.500M11 11L7.500 7.500M1 11l3.500-3.500" fill="none" stroke="#999" stroke-width="1.300"/></svg></button>
        <button class="mini" aria-label="Kapat"><svg width="12" height="12" viewBox="0 0 12 12"><path d="M1 1l10 10M11 1L1 11" stroke="#8c8c8c" stroke-width="2.200"/></svg></button>
      </div>
      <div class="tabs top"><button class="tab active">Model</button><button class="tab">Görevler</button></div>

      <section class="tree">
        <div class="treehead"><span>Etiketler &amp; öznitelikleri</span><span>Açıklama</span></div>
        <ul>
          <li class="root">Uygulama</li>
          <li class="file"><svg class="branch" viewBox="0 0 17 18"><path d="M6.500 0v5M10 9.500h7" stroke="#c8c8c8"/><path d="M2.500 7.500l4 3.500 4-3.500" fill="none" stroke="#999" stroke-width="1.600"/></svg><svg class="ico"><use href="#doc"/></svg>Curves_WB_BlendSolid_3</li>
          <li class="leaf"><svg class="branch" viewBox="0 0 17 18"><path d="M6.500 0v18M6.500 9.500H17" stroke="#c8c8c8"/></svg><svg class="ico"><use href="#cube"/></svg>Küp</li>
          <li class="leaf"><svg class="branch" viewBox="0 0 17 18"><path d="M6.500 0v18M6.500 9.500H17" stroke="#c8c8c8"/></svg><svg class="ico"><use href="#cyl"/></svg>Silindir</li>
          <li class="leaf"><svg class="branch" viewBox="0 0 17 18"><path d="M6.500 0v6M6.500 13v5M9 9.500h8" stroke="#c8c8c8"/><path d="M5 5.500l3.500 3.500L5 12.500" fill="none" stroke="#999" stroke-width="1.600"/></svg><svg class="ico"><use href="#compound"/></svg>Compound</li>
          <li class="leaf selected"><svg class="branch" viewBox="0 0 17 18"><path d="M6.500 0v7.500q0 2 2 2H17" fill="none" stroke="#4c7bdc"/></svg><svg class="ico"><use href="#blend"/></svg>Blend_Solid</li>
        </ul>
      </section>

      <div class="hsplit"></div>

      <section class="props">
        <div class="propview">
          <table>
            <thead><tr><th>Özellik</th><th>Değer</th></tr></thead>
            <tbody>
              <tr class="group"><td colspan="2">Baz</td></tr>
              <tr class="alt"><td><div class="name"><svg class="branch" viewBox="0 0 17 20"><path d="M6.500 0v6M6.500 15v5M10 10.500h7" stroke="#c8c8c8"/><path d="M5 6.500l3.500 3.500L5 13.500" fill="none" stroke="#999" stroke-width="1.600"/></svg><span>Placement</span></div></td><td class="val">[(0,00 0,00 1,00); 0,00 °; (0,0…</td></tr>
              <tr><td><div class="name"><svg class="branch" viewBox="0 0 17 20"><path d="M6.500 0v20M6.500 10.500H17" stroke="#c8c8c8"/></svg><span>Label</span></div></td><td class="val">Blend_Solid</td></tr>
              <tr class="alt"><td><div class="name"><svg class="branch" viewBox="0 0 17 20"><path d="M6.500 0v8.500q0 2 2 2H17" fill="none" stroke="#c8c8c8"/></svg><span>Sources</span></div></td><td class="val">[Compound.Face1, Box.Face2…</td></tr>
              <tr class="group"><td colspan="2">Süreklilik</td></tr>
              <tr class="alt sel"><td><div class="name"><svg class="branch" viewBox="0 0 17 20"><path d="M6.500 0v20M6.500 10.500H17" stroke="#4c7bdc"/></svg><span>Continuity1</span></div></td><td class="val">3</td></tr>
              <tr class="sel"><td><div class="name"><svg class="branch" viewBox="0 0 17 20"><path d="M6.500 0v8.500q0 2 2 2H17" fill="none" stroke="#4c7bdc"/></svg><span>Continuity2</span></div></td><td class="val">5</td></tr>
              <tr class="group"><td colspan="2">Scale</td></tr>
              <tr><td><div class="name"><svg class="branch" viewBox="0 0 17 20"><path d="M6.500 0v20M6.500 10.500H17" stroke="#c8c8c8"/></svg><span>Auto Scale</span></div></td><td class="val">RegularPoles</td></tr>
              <tr class="alt"><td><div class="name"><svg class="branch" viewBox="0 0 17 20"><path d="M6.500 0v8.500q0 2 2 2H17" fill="none" stroke="#c8c8c8"/></svg><span>Scale Samples</span></div></td><td class="val">6</td></tr>
              <tr class="group"><td colspan="2">Settings</td></tr>
              <tr class="alt"><td><div class="name"><svg class="branch" viewBox="0 0 17 20"><path d="M6.500 0v20M6.500 10.500H17" stroke="#c8c8c8"/></svg><span>Fuse</span></div></td><td class="val">false</td></tr>
            </tbody>
          </table>
        </div>
        <div class="scroll"><svg class="up"><use href="#chev"/></svg><div class="track"><div class="thumb"></div></div><svg><use href="#chev"/></svg></div>
      </section>

      <div class="tabs bottom"><button class="tab">Görünüm</button><button class="tab active">Veri</button></div>
    </aside>

    <div class="vsplit"></div>

    <section class="workspace">
      <div class="view">
        <svg class="model" viewBox="374 129 742 592" preserveAspectRatio="xMidYMid slice" role="img" aria-label="Blend_Solid">
          <defs>
            <linearGradient id="g-front" gradientUnits="userSpaceOnUse" x1="572" y1="500" x2="850" y2="530"><stop offset="0" stop-color="#8fff2d"/><stop offset=".45" stop-color="#96ff2d"/><stop offset=".67" stop-color="#b4ff33"/><stop offset=".8" stop-color="#9cff2e"/><stop offset="1" stop-color="#66fb2a"/></linearGradient>
            <linearGradient id="g-pocket" gradientUnits="userSpaceOnUse" x1="650" y1="400" x2="690" y2="508"><stop offset="0" stop-color="#86ff2b"/><stop offset=".35" stop-color="#96ff2d"/><stop offset=".75" stop-color="#7aff29"/><stop offset="1" stop-color="#5ce829"/></linearGradient>
            <linearGradient id="g-side" gradientUnits="userSpaceOnUse" x1="790" y1="500" x2="892" y2="520"><stop offset="0" stop-color="#7cff2b"/><stop offset=".4" stop-color="#6bff29"/><stop offset=".75" stop-color="#9cff2e"/><stop offset="1" stop-color="#6dff2a"/></linearGradient>
            <linearGradient id="g-cyl" gradientUnits="userSpaceOnUse" x1="820" y1="193" x2="901" y2="332"><stop offset="0" stop-color="#14060a"/><stop offset=".2" stop-color="#560b22"/><stop offset=".5" stop-color="#8f0d36"/><stop offset=".75" stop-color="#800c30"/><stop offset=".92" stop-color="#4a0a1e"/><stop offset="1" stop-color="#14060a"/></linearGradient>
            <linearGradient id="g-streak" gradientUnits="userSpaceOnUse" x1="856" y1="370" x2="815" y2="600"><stop offset="0" stop-color="#34bd2a"/><stop offset=".45" stop-color="#4bdd2a"/><stop offset="1" stop-color="#60f02a" stop-opacity="0"/></linearGradient>
            <filter id="b3" x="-50%" y="-50%" width="200%" height="200%"><feGaussianBlur stdDeviation="3"/></filter>
            <filter id="b4" x="-50%" y="-50%" width="200%" height="200%"><feGaussianBlur stdDeviation="5"/></filter>
            <filter id="b8" x="-80%" y="-50%" width="260%" height="200%"><feGaussianBlur stdDeviation="9"/></filter>
            <path id="p-front" d="M572 456C610 479 650 504 671 506.500C710 510 721 465 723 455C730 420 731 405 737 383L738 350C739 325 741 285 745 273C748 264 755 245 763 235C775 222 790 210 807 199L830 330L888 341C866 354 850 370 843 383C836 395 830 409 825 420L805 487L785 563C782 575 776 590 770 605C764 618 759 628 753 635C748 643 738 654 727 659Q710 664 700 662.500Q690 661 682 657Q660 648 633 634L572 599z"/>
            <path id="p-side" d="M888 341C878 347 870 352 865 357Q859 366 858 372L859 390C860 408 868 440 878 483C884 508 890 540 890.500 567Q891 580 888 588C884 601 877 604 868 605L833 609Q815 611 808 615L777 632 740 652C748 643 760 628 770 605C776 590 782 575 785 563L805 487 825 420C830 409 836 395 843 383C850 370 866 354 888 341z"/>
            <path id="p-pocket" d="M572 456L697 384L737 394C731 410 730 430 723 455C721 465 710 510 671 506.500C650 504 610 479 572 456z"/>
            <clipPath id="k-front"><use href="#p-front"/></clipPath>
            <clipPath id="k-side"><use href="#p-side"/></clipPath>
            <clipPath id="k-pocket"><use href="#p-pocket"/></clipPath>
          </defs>
          <g clip-path="url(#k-pocket)"><use href="#p-pocket" fill="url(#g-pocket)"/><path d="M678 511q22 0 34-28" fill="none" stroke="#2a9a2a" stroke-width="9" filter="url(#b4)"/></g>
          <g clip-path="url(#k-side)"><use href="#p-side" fill="url(#g-side)"/><path d="M858 366C855 410 846 450 838 500C830 545 822 570 808 600" fill="none" stroke="url(#g-streak)" stroke-width="14" filter="url(#b4)"/><path d="M860 385L866 425L888 530" fill="none" stroke="#36c22b" stroke-width="4" filter="url(#b3)"/><path d="M735 660L808 617L884 607" fill="none" stroke="#2cb02a" stroke-width="13" filter="url(#b4)"/><path d="M866 460Q860 520 866 565" fill="none" stroke="#a6ff2e" stroke-width="14" filter="url(#b8)"/></g>
          <g clip-path="url(#k-front)"><use href="#p-front" fill="url(#g-front)"/><path d="M768 318Q748 335 742 383L737 383L739 290L763 235L807 199L800 280z" fill="#7eff2b" filter="url(#b8)"/><path d="M736 372L738 310L744 268L763 233L812 196" fill="none" stroke="#2fae2b" stroke-width="8" filter="url(#b4)"/><path d="M890 345Q850 358 832 400" fill="none" stroke="#3cd92a" stroke-width="12" filter="url(#b8)"/><path d="M782 370Q765 450 765 600" fill="none" stroke="#b9ff33" stroke-width="18" filter="url(#b8)"/></g>
          <g fill="none" stroke="#35f53a">
            <path d="M572 456C610 479 650 504 671 506.500C710 510 721 465 723 455C730 420 731 405 737 383L745 358Q750 343 757 332Q761 324 768 318L789 304"/>
            <path d="M888 341C866 354 850 370 843 383C836 395 830 409 825 420L805 487L785 563C782 575 776 590 770 605C764 618 759 628 753 635L740 652"/>
            <path d="M697 384L737 394M861 403C864 430 872 455 878 483C884 508 890 540 890.500 567Q891 580 888 588C884 601 877 604 868 605M740 652C738 654 734 657 727 659Q710 664 700 662.500Q690 661 682 657Q660 648 633 634L572 599"/>
          </g>
          <g stroke="#17111c" stroke-linejoin="round">
            <path d="M634 348.500L510.500 420L572 456L696 384z" fill="#790c58"/>
            <path d="M510.500 420L572 456V599L510.500 564z" fill="#760b56"/>
            <path d="M572.500 456V599"/>
          </g>
          <path d="M806.900 200.700A80.400 66 59.500 0 0 887.700 339.900L913.700 324.900L832.900 185.700z" fill="url(#g-cyl)"/>
          <path d="M832.900 185.700L806.900 200.700M887.700 339.900L913.700 324.900" stroke="#17111c"/>
          <path d="M806.900 200.700A80.400 66 59.500 0 0 887.700 339.900" fill="none" stroke="#35f53a"/>
          <path d="M806.900 200.700A80.400 66 59.500 0 0 887.700 339.900" fill="none" stroke="#101010" stroke-dasharray="4 2"/>
          <ellipse cx="873.300" cy="255.300" rx="80.400" ry="66" transform="rotate(59.500 873.300 255.300)" fill="#d00e4a" stroke="#17111c"/>
          <path d="M570 454h4v4h-4zM570 597h4v4h-4zM695 382h4v4h-4zM805 198h4v4h-4zM787 302h4v4h-4zM886 339h4v4h-4z" fill="#2fff3c"/>
        </svg>

        <svg class="navcube" viewBox="-9 0 459 480" role="img" aria-label="Gezinme küpü">
          <g fill="#d3d3e2" fill-opacity=".85">
            <path d="M183 60L219 24l36 36zM183 432h72l-36 36zM33 210v72L-3 246zM405 210v72l36-36z"/>
            <circle cx="424" cy="41" r="20"/>
            <path d="M155 46l7 23Q115 87 87 115l10 11-46 14 8-49 11 10Q105 62 155 46zM284 46l-8 23Q325 87 351 115l-10 11 46 14-9-49-10 10Q335 62 284 46z"/>
          </g>
          <g fill="#ccd0de" stroke="#23242b" stroke-width="3" stroke-linejoin="round">
            <path d="M96 205L128 155L205 127H232L311 155L342 212L325 310L253 368H186L115 300z"/>
            <path d="M128 155L205 127H232L311 155L313 170L241 208H197L122 170z"/>
            <path d="M122 170L105 203L178 244L197 208zM313 170L331 203L260 246L241 208z"/>
            <path d="M197 208H241L260 246L239 283H199L178 244z"/>
            <path d="M199 283H239V368H199z"/>
            <path d="M122 170L96 212L105 203M313 170L342 214L331 203" fill="none"/>
            <path d="M186 369h67" stroke-width="5"/>
          </g>
          <g class="cubetext">
            <text x="222" y="172" transform="rotate(12 222 162)">TOP</text>
            <text x="148" y="298" transform="rotate(36 148 290)">FRONT</text>
            <text x="290" y="298" transform="rotate(-38 290 290)">RIGHT</text>
          </g>
          <path d="M94 318L70 208" stroke="#0000f0" stroke-width="5"/><path d="M94 318L177 394" stroke="#f00000" stroke-width="4"/><path d="M94 318L120 303" stroke="#00e800" stroke-width="5"/><path d="M120 303L185 266" stroke="#9be8a4" stroke-width="4"/>
          <path d="M298 402l34-15 33 15v36l-33 15-34-13z" fill="#a9a9ba"/><path d="M298 402l34-15 33 15-31 8z" fill="#c3c3d0"/><path d="M334 410l31-8v36l-31 15z" fill="#8f8fa3"/>
          <path d="M377 408h43l-21 22z" fill="#55556a"/>
        </svg>

        <svg class="triad" viewBox="1076 660 40 44" role="img" aria-label="Eksenler">
          <path d="M1087 692V677" stroke="#16167a" stroke-width="1.500"/><path d="M1084.500 680l2.500-8 2.500 8z" fill="#16167a"/>
          <path d="M1087 692l8-5" stroke="#1c7a1c"/><path d="M1093 685l6.500-2-3 6z" fill="#1c7a1c"/>
          <path d="M1087 692l10 5" stroke="#8e1616"/><path d="M1097 694l7 7-9-1.500z" fill="#8e1616"/>
          <text x="1087" y="671">Z</text><text x="1099" y="683">Y</text><text x="1104" y="700">X</text>
        </svg>
      </div>
      <div class="filetabs">
        <div class="filetab"><svg class="ico"><use href="#fclogo"/></svg><span>Curves_WB_BlendSolid_3 : 1*</span><button class="mini" aria-label="Sekmeyi kapat"><svg width="12" height="12" viewBox="0 0 12 12"><path d="M1.500 1.500l9 9M10.500 1.500l-9 9" stroke="#999" stroke-width="2"/></svg></button></div>
      </div>
    </section>
  </main>

  <footer class="status">
    <p>Preselected: Unnamed.Blend_Solid.Face1 (19.722353 mm, 6.552203 mm, 12.527624 mm)</p>
    <button class="sbtn count"><svg width="16" height="18" viewBox="0 0 16 18"><rect x=".5" y=".5" width="15" height="17" rx="2" fill="#f7f7f7" stroke="#bbb"/><rect x="3.500" y="4.500" width="9" height="9" fill="#e85050" stroke="#5a2020"/><path d="M4 13V5h8z" fill="#f5a5a5"/></svg>3<i class="arrow"></i></button>
    <button class="sbtn nav"><svg width="12" height="16" viewBox="0 0 12 16"><rect x="1.500" y="1.500" width="9" height="13" rx="4.500" fill="#fff" stroke="#333b40" stroke-width="1.600"/><path d="M6 1v5" stroke="#333b40"/><rect x="5" y="4" width="2" height="4" rx="1" fill="#333b40"/></svg>Blender</button>
    <button class="sbtn dims">42,25 mm x 33,71 mm<i class="arrow"></i></button>
  </footer>
</div>
</body>
</html>
```
FILE: styles.css
```css
* { box-sizing: border-box; }
body {
  margin: 0;
  height: 100vh;
  padding: 8px 10px 9px;
  background: #fff;
  color: #4d4d4d;
  font: 12px/18px "DejaVu Sans", sans-serif;
  overflow: hidden;
}
button {
  margin: 0;
  padding: 0;
  border: 0;
  background: none;
  color: inherit;
  font: inherit;
}
h1, h2, p, ul { margin: 0; padding: 0; }
svg { display: block; flex: none; }
.defs { position: absolute; width: 0; height: 0; }
.ico { width: 16px; height: 16px; }

.window {
  height: 100%;
  display: flex;
  flex-direction: column;
  border-radius: 5px 5px 0 0;
  background: #f5f5f5;
  box-shadow: 0 0 0 1px #9a9a9a, 0 3px 14px 2px rgba(0, 0, 0, 0.5);
}

.titlebar {
  height: 37px;
  display: grid;
  grid-template-columns: 1fr auto 1fr;
  align-items: center;
  padding: 0 8px;
  border-radius: 5px 5px 0 0;
  border-bottom: 1px solid #413a36;
  background: #574f4a;
  color: #fff;
}
.titlebar h1 {
  grid-column: 2;
  padding-top: 1px;
  font: bold 12px/18px "Noto Sans", sans-serif;
}
.wincontrols { display: flex; justify-content: flex-end; align-items: center; gap: 15px; }

.menubar {
  height: 20px;
  display: flex;
  align-items: center;
  gap: 14px;
  padding: 2px 0 0 10px;
  color: #111;
}
.menubar u { text-underline-offset: 2px; }

.toolrow { height: 32px; display: flex; padding-left: 6px; }
.toolbar { display: flex; align-items: center; }
.toolbar + .toolbar { margin-left: 8px; }
.toolbar + .snug { margin-left: 3px; }
.grip {
  width: 9px;
  height: 22px;
  background:
    repeating-linear-gradient(180deg, transparent 0 2px, #f5f5f5 2px 4px),
    linear-gradient(90deg, transparent 2px, #bdbdbd 2px 4px, transparent 4px 6px, #bdbdbd 6px 8px, transparent 8px);
}
.tool { width: 28px; height: 28px; display: grid; place-items: center; position: relative; }
.tool svg { width: 16px; height: 16px; }
.tool.wide svg { width: 18px; }
.tool .tiny { position: absolute; right: 4px; bottom: 5px; color: #777; }
.tool.wide .tiny { width: 9px; height: 6px; }
.sep { width: 1px; height: 18px; margin: 0 5px 0 4px; background: #cfcfcf; }
.drop { width: 20px; height: 20px; display: grid; place-items: end center; color: #777; }
.drop svg { width: 10px; height: 6px; }
.extend { width: 21px; height: 28px; display: grid; place-items: center; }
.extend.last { width: 15px; }
.extend svg { width: 12px; height: 10px; }

.combo {
  position: relative;
  width: 182px;
  height: 24px;
  margin-left: 1px;
  border-radius: 3px;
  background: linear-gradient(90deg, #e0e0e0 162px, #d0d0d0 162px);
  color: #707070;
}
.combo select {
  width: 100%;
  height: 100%;
  padding: 0 0 0 25px;
  border: 0;
  background: transparent;
  appearance: none;
  color: inherit;
  font: inherit;
}
.comboicon, .combochev { position: absolute; pointer-events: none; }
.comboicon { left: 3px; top: 4px; width: 16px; height: 16px; }
.combochev { right: 6px; top: 9px; width: 10px; height: 6px; color: #666; }

.main { flex: 1; min-height: 0; display: flex; }
.dock { width: 354px; display: flex; flex-direction: column; padding-top: 4px; }
.docktitle {
  height: 23px;
  display: flex;
  align-items: center;
  gap: 6px;
  margin: 0 4px;
  padding: 0 6px 0 16px;
  border-radius: 3px;
  background: #eaeaea;
  color: #858585;
}
.docktitle h2 { flex: 1; font: inherit; text-align: center; }
.mini { display: grid; place-items: center; }

.tabs { height: 29px; display: flex; }
.tabs.top { margin-top: 4px; box-shadow: inset 0 -1px #cbcbcb; padding-left: 10px; }
.tabs.bottom { margin-top: 7px; box-shadow: inset 0 1px #cbcbcb; }
.tab { padding: 0 21px; }
.tab.active { width: 85px; padding: 0; background: #f5f5f5; border: 1px solid #cbcbcb; }
.top .tab.active { border-bottom: 0; border-top: 3px solid #4a80f7; padding-bottom: 2px; }
.bottom .tab:not(.active) { width: 101px; padding: 0 0 0 7px; }
.bottom .tab.active { border-top: 0; border-bottom: 4px solid #4a80f7; padding-top: 4px; }

.tree, .props {
  margin: 0 6px;
  border: 1px solid #bebebe;
  border-radius: 4px;
  background: #efefef;
  overflow: hidden;
  min-height: 0;
}
.tree { flex: 244 1 0; margin-top: 6px; }
.props { flex: 258 1 0; display: flex; }
.treehead { display: grid; grid-template-columns: 216px 1fr; height: 27px; line-height: 28px; background: #c3c3c3; }
.treehead span { padding-left: 6px; }
.treehead span:first-child { border-right: 1px solid #a9a9a9; }
.tree ul { list-style: none; }
.tree li { height: 18px; display: flex; align-items: center; }
.tree .root { height: 17px; padding-left: 3px; }
.tree .file { padding-left: 3px; font-weight: bold; }
.tree .leaf { padding-left: 23px; }
.tree .branch { width: 17px; height: 18px; margin-right: 3px; }
.tree .ico { margin-right: 6px; }
.tree .selected { width: 295px; background: #5d91f9; color: #fff; }
.tree ul { margin-top: -1px; }

.hsplit {
  height: 22px;
  background: repeating-linear-gradient(90deg, #808080 0 6px, transparent 6px 8px) center / 38px 2px no-repeat;
}
.vsplit {
  width: 10px;
  background: repeating-linear-gradient(180deg, #808080 0 6px, transparent 6px 8px) center / 2px 38px no-repeat;
}

.propview { flex: 1; overflow: hidden; }
.props table { width: 100%; table-layout: fixed; border-spacing: 0; }
.props th, .props td { padding: 0; }
.props th {
  height: 27px;
  padding-left: 6px;
  background: #c3c3c3;
  font-weight: normal;
  text-align: left;
}
.props th:first-child { width: 129px; border-right: 1px solid #a9a9a9; }
.props td { height: 20px; }
.props .group td { padding: 2px 0 0 3px; background: #d1d1d1; color: #828282; font-weight: bold; }
.props .alt { background: #e5e5e5; }
.name { height: 20px; display: flex; padding-left: 3px; border-right: 1px solid #cdcdcd; }
.name .branch { width: 17px; height: 20px; }
.name span { flex: 1; padding: 1px 0 0 3px; border-bottom: 1px solid #cdcdcd; }
.sel .name { background: #5d91f9; color: #fff; }
.props .val {
  padding: 1px 0 0 3px;
  border-bottom: 1px solid #cdcdcd;
  white-space: nowrap;
}
.scroll {
  width: 16px;
  display: flex;
  flex-direction: column;
  align-items: center;
  padding: 3px 0;
  border-left: 1px solid #d6d6d6;
  color: #777;
}
.scroll svg { width: 10px; height: 6px; }
.scroll .up { transform: rotate(180deg); }
.track { flex: 1; width: 7px; margin: 6px 0; }
.thumb { height: 55%; border-radius: 4px; background: #a4a4a4; }

.workspace { flex: 1; min-width: 0; display: flex; flex-direction: column; }
.view {
  position: relative;
  flex: 1;
  min-height: 0;
  overflow: hidden;
  background: radial-gradient(farthest-corner circle, #343467, #9696a8);
}
.model { position: absolute; width: 100%; height: 100%; }
.navcube { position: absolute; top: 1px; right: 6px; width: 153px; height: 160px; }
.triad { position: absolute; right: 0; bottom: 17px; width: 40px; height: 44px; }
.cubetext { font: bold 26px "Liberation Sans", sans-serif; fill: #4d4f5a; text-anchor: middle; }
.triad text { font: bold 9px "Liberation Sans", sans-serif; fill: #000; }

.filetabs { height: 34px; border-top: 1px solid #cbcbcb; display: flex; }
.filetab {
  display: flex;
  align-items: center;
  padding: 4px 7px 0 3px;
  border: 1px solid #cbcbcb;
  border-top: 0;
  border-bottom: 4px solid #4a80f7;
}
.filetab .ico { margin-right: 10px; }
.filetab .mini { margin-left: 13px; }

.status { height: 40px; display: flex; align-items: center; padding: 0 28px 0 2px; }
.status p { flex: 1; padding-top: 2px; white-space: nowrap; }
.sbtn {
  position: relative;
  height: 26px;
  display: flex;
  align-items: center;
  justify-content: center;
  gap: 6px;
  margin-left: 14px;
  padding-top: 2px;
  border: 1px solid #c4c4c4;
  border-radius: 4px;
  background: linear-gradient(#f6f6f6, #e9e9e9);
  color: #707070;
}
.count { width: 86px; padding-right: 12px; }
.nav { width: 121px; padding-right: 6px; }
.dims { width: 196px; padding-right: 12px; }
.arrow {
  position: absolute;
  right: 3px;
  bottom: 3px;
  border: 4px solid transparent;
  border-top-color: #888;
  border-bottom: 0;
}
```
